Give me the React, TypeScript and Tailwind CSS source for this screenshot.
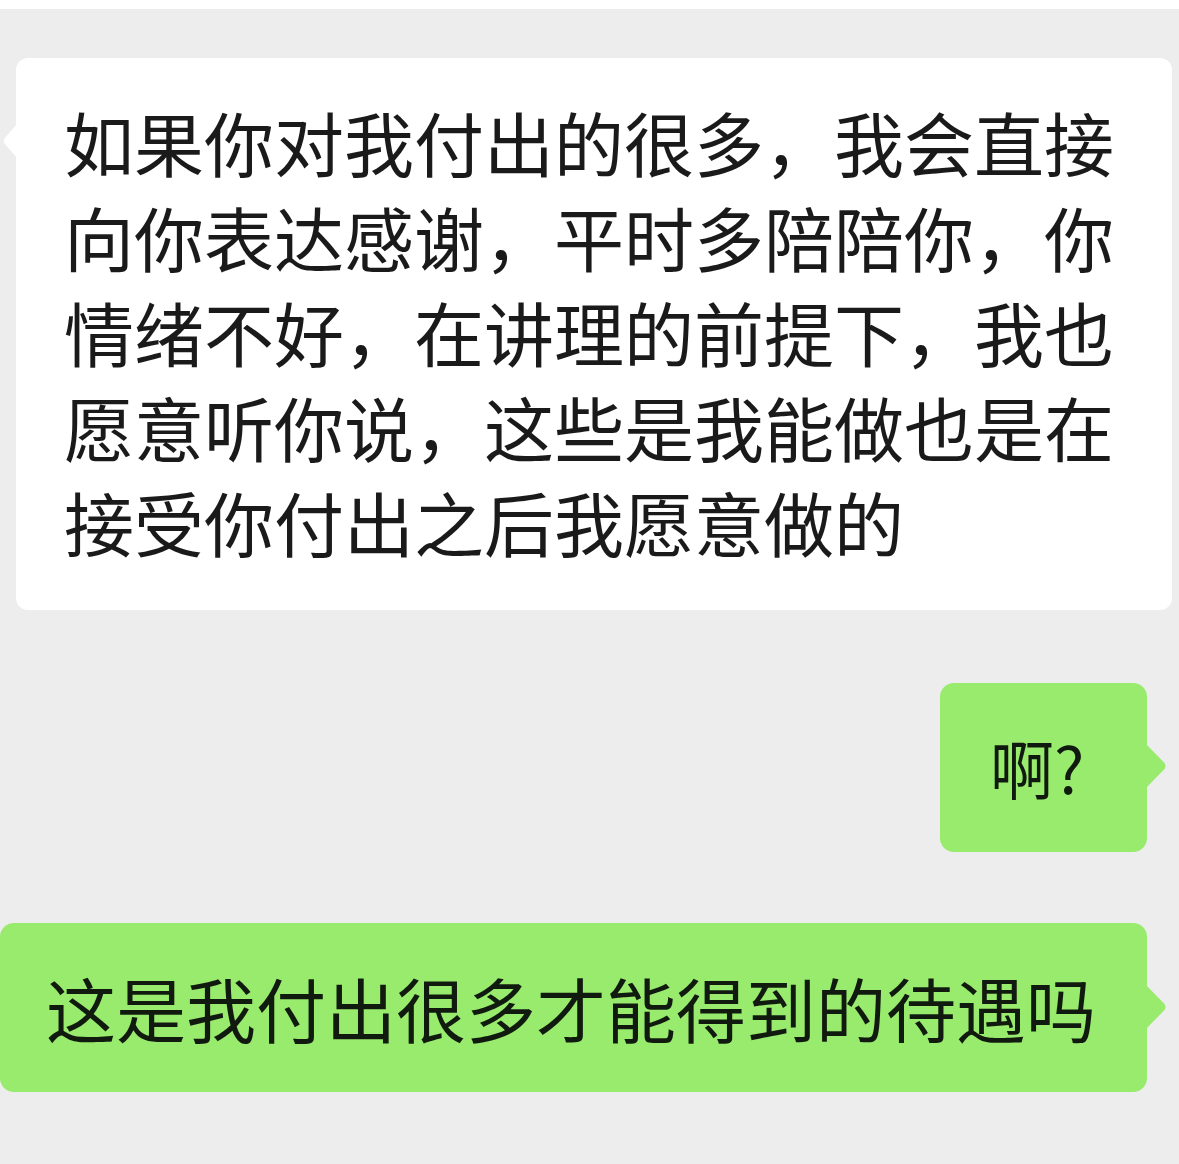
const font = { fontFamily: '"Noto Sans CJK SC", "Noto Sans", sans-serif' };

const lines = [
  "如果你对我付出的很多，我会直接",
  "向你表达感谢，平时多陪陪你，你",
  "情绪不好，在讲理的前提下，我也",
  "愿意听你说，这些是我能做也是在",
  "接受你付出之后我愿意做的",
];

function LeftTail() {
  return (
    <svg className="absolute left-[-14px] top-[66px]" width="15" height="34" viewBox="0 0 15 34">
      <path d="M15 0 L2.5 14.5 Q1 17 2.5 19.5 L15 34 Z" fill="#ffffff" />
    </svg>
  );
}

function RightTail({ top }: { top: number }) {
  return (
    <svg className="absolute right-[-20px]" style={{ top }} width="21" height="44" viewBox="0 0 21 44">
      <path d="M0 0 L18.5 19 Q20.5 22 18.5 25 L0 44 Z" fill="#98eb6c" />
    </svg>
  );
}

export default function App() {
  return (
    <div className="w-[1179px] h-[1164px] bg-[#ededed] flex flex-col overflow-hidden" style={font}>
      <div className="h-[9px] bg-white shrink-0" />

      {/* received message */}
      <div className="relative mt-[49px] ml-[16px] w-[1156px] h-[552px] bg-white rounded-[12px] pl-[48px] pt-[36px] text-[70px] leading-[95px] text-[#1a1a1a]">
        <LeftTail />
        {lines.map((l) => (
          <div key={l} className="whitespace-nowrap">{l}</div>
        ))}
      </div>

      {/* sent: short */}
      <div className="relative mt-[73px] self-end mr-[32px] w-[207px] h-[169px] bg-[#98eb6c] rounded-[14px] flex items-center pl-[50px] text-[64px] leading-none text-[#111a0e]">
        <RightTail top={61} />
        <span className="-mt-[4px]">啊?</span>
      </div>

      {/* sent: long */}
      <div className="relative mt-[71px] w-[1147px] h-[169px] bg-[#98eb6c] rounded-[14px] flex items-center pl-[46px] text-[70px] leading-none text-[#111a0e]">
        <RightTail top={62} />
        <span className="whitespace-nowrap">这是我付出很多才能得到的待遇吗</span>
      </div>
    </div>
  );
}
